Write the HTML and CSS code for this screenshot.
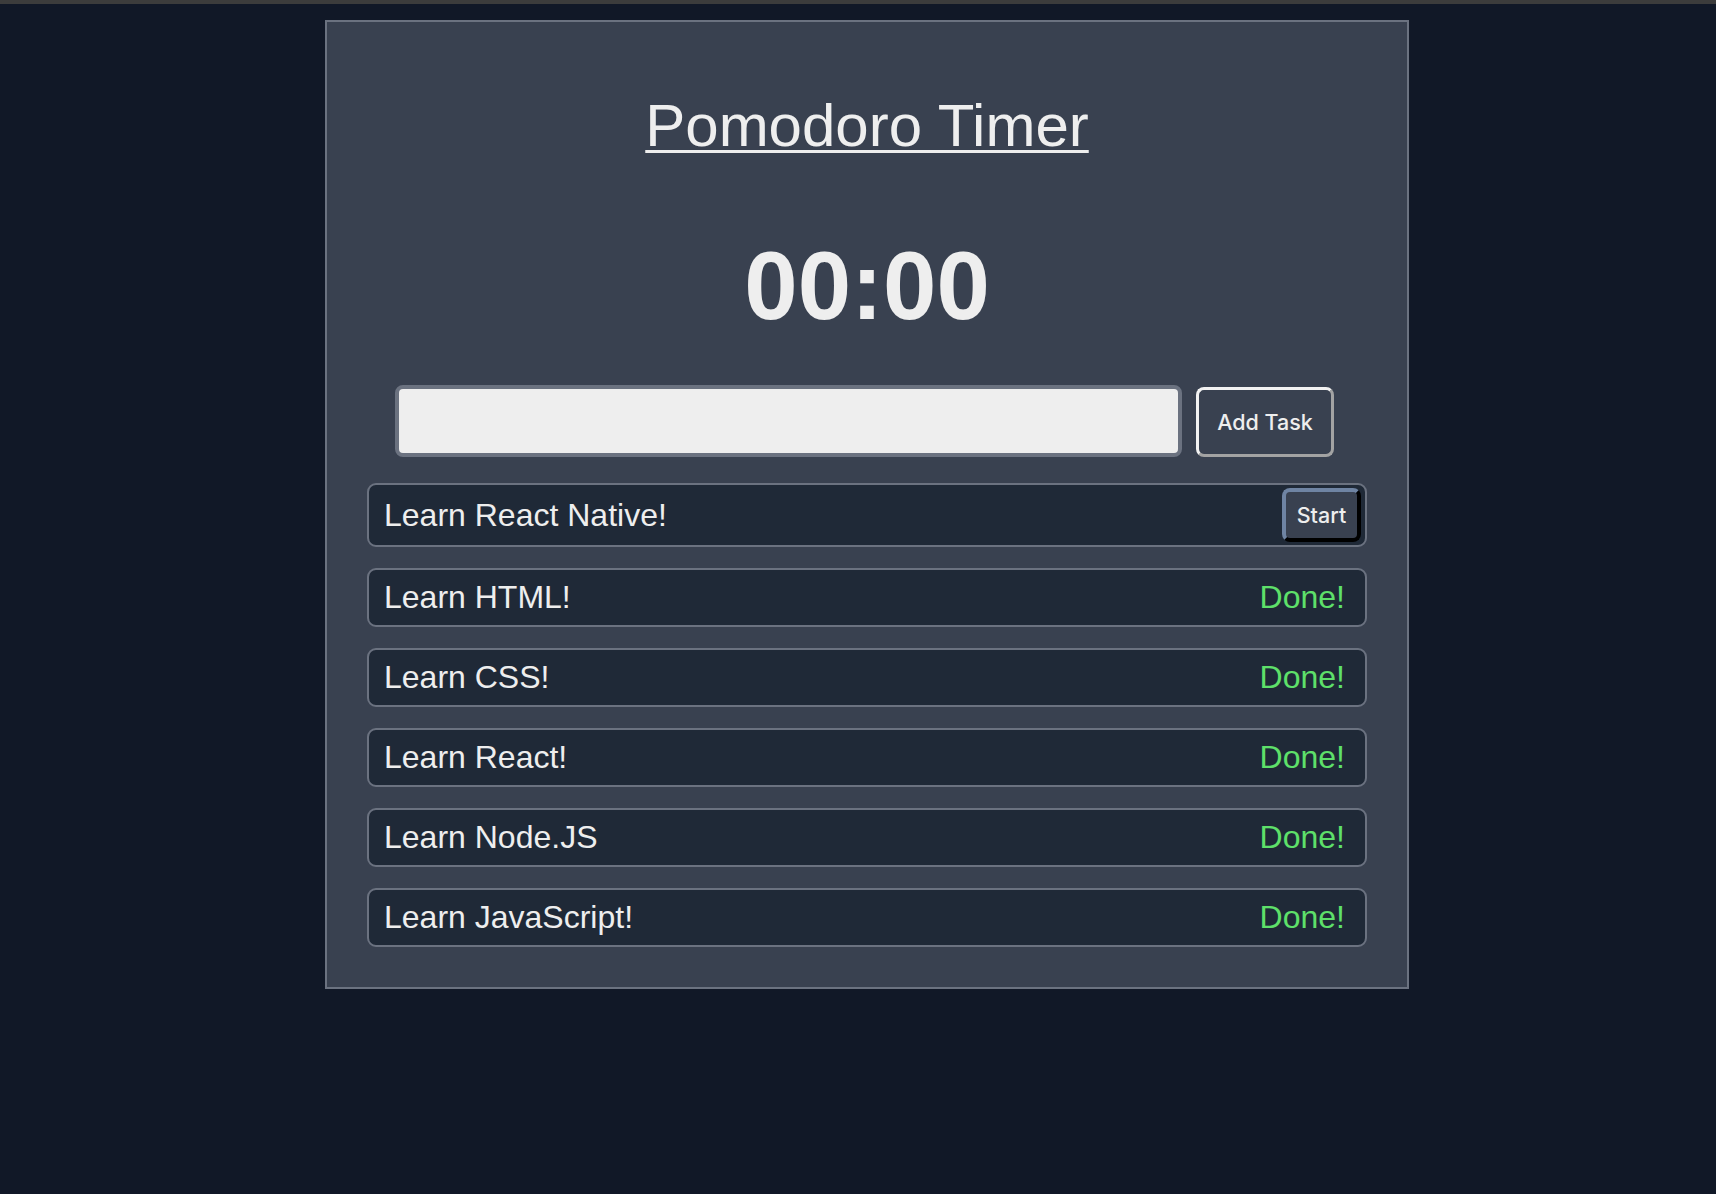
FILE: index.html
```html
<!DOCTYPE html>
<html>
<head>
<meta charset="utf-8">
<title>Pomodoro Timer</title>
<link rel="stylesheet" href="styles.css">
</head>
<body>
<div class="topbar"></div>
<main class="panel">
  <h1 class="title">Pomodoro Timer</h1>
  <div class="timer">00:00</div>
  <div class="add-row">
    <input class="task-input" type="text">
    <button class="add-btn">Add Task</button>
  </div>
  <ul class="tasks">
    <li class="task"><span class="task-name">Learn React Native!</span><button class="start-btn">Start</button></li>
    <li class="task"><span class="task-name">Learn HTML!</span><span class="done">Done!</span></li>
    <li class="task"><span class="task-name">Learn CSS!</span><span class="done">Done!</span></li>
    <li class="task"><span class="task-name">Learn React!</span><span class="done">Done!</span></li>
    <li class="task"><span class="task-name">Learn Node.JS</span><span class="done">Done!</span></li>
    <li class="task"><span class="task-name">Learn JavaScript!</span><span class="done">Done!</span></li>
  </ul>
</main>
</body>
</html>
```
FILE: styles.css
```css
html, body {
  margin: 0;
  padding: 0;
  background: #111827;
  font-family: "Liberation Sans", Arial, sans-serif;
  color: #eeeeee;
}

.topbar {
  height: 4px;
  background: #3c3c3c;
}

.panel {
  box-sizing: border-box;
  width: 1084px;
  margin: 16px 0 0 calc(50% - 533px);
  background: #394150;
  border: 2px solid #6b7280;
  padding: 69px 40px 40px 40px;
  display: flex;
  flex-direction: column;
}

.title {
  margin: 0;
  font-size: 60px;
  font-weight: 400;
  line-height: 69px;
  text-align: center;
  text-decoration: underline;
  text-decoration-thickness: 3px;
  text-underline-offset: 4px;
}

.timer {
  margin-top: 71px;
  font-size: 96px;
  font-weight: 700;
  line-height: 110px;
  text-align: center;
}

.add-row {
  margin-top: 44px;
  display: flex;
  align-items: center;
  gap: 14px;
  padding-left: 28px;
}

.task-input {
  box-sizing: border-box;
  width: 787px;
  height: 72px;
  margin: 0;
  border: 4px solid #6b7280;
  border-radius: 8px;
  background: #eeeeee;
  font-size: 21px;
}

.add-btn {
  box-sizing: border-box;
  width: 138px;
  height: 70px;
  margin: 1px 0 0 0;
  padding: 0;
  background: transparent;
  color: #eeeeee;
  font-family: Inter, "Noto Sans", sans-serif;
  font-size: 21.5px;
  font-weight: 500;
  border: 3px solid;
  border-color: #f2f2f2 #a3a3a3 #a3a3a3 #f2f2f2;
  border-radius: 8px;
}

.tasks {
  list-style: none;
  margin: 26px 0 0 0;
  padding: 0;
  display: flex;
  flex-direction: column;
  gap: 21px;
}

.task {
  box-sizing: border-box;
  display: flex;
  align-items: center;
  justify-content: space-between;
  background: #1f2937;
  border: 2px solid #6b7280;
  border-radius: 9px;
  padding: 3px 3px 3px 15px;
  font-size: 32px;
  line-height: 37px;
}

.done {
  color: #5ee06a;
  padding: 6px 17px 6px 0;
}

.start-btn {
  box-sizing: border-box;
  width: 79px;
  height: 54px;
  margin: 0 1px 0 0;
  padding: 0;
  background: #394150;
  color: #eeeeee;
  font-family: Inter, "Noto Sans", sans-serif;
  font-size: 21.5px;
  font-weight: 500;
  border: 4px solid;
  border-color: #6f84a3 #000000 #000000 #6f84a3;
  border-radius: 8px;
}
```
